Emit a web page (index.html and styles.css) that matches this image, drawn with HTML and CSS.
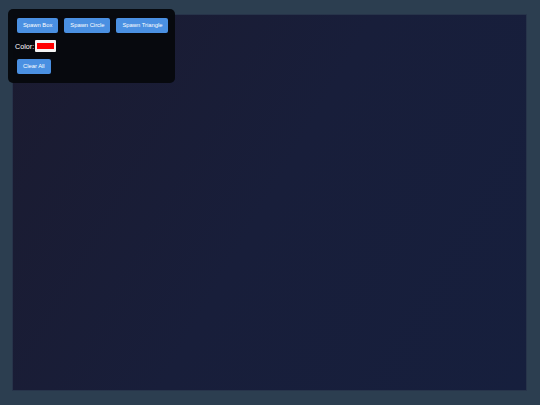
FILE: index.html
```html
<!DOCTYPE html>
<html>
<head>
<meta charset="utf-8">
<link rel="stylesheet" href="styles.css">
</head>
<body>
<div class="stage">
  <div class="canvas"></div>
  <div class="panel">
    <div class="row buttons">
      <button class="btn">Spawn Box</button>
      <button class="btn">Spawn Circle</button>
      <button class="btn">Spawn Triangle</button>
    </div>
    <div class="row color-row">
      <span class="label">Color:</span>
      <span class="swatch"><span class="swatch-fill"></span></span>
    </div>
    <div class="row">
      <button class="btn">Clear All</button>
    </div>
  </div>
</div>
</body>
</html>
```
FILE: styles.css
```css
html, body {
  margin: 0;
  padding: 0;
}
body {
  width: 540px;
  height: 405px;
  background: #2c3e50;
  font-family: "Liberation Sans", Arial, sans-serif;
  overflow: hidden;
}
.stage {
  position: relative;
  width: 540px;
  height: 405px;
  padding: 14px 13px 14px 12px;
  box-sizing: border-box;
}
.canvas {
  width: 515px;
  height: 377px;
  box-sizing: border-box;
  border: 1px solid #27344a;
  background: linear-gradient(120deg, #1b1b30 0%, #181e3a 50%, #161f3d 100%);
}
.panel {
  position: absolute;
  top: 9px;
  left: 8px;
  width: 167px;
  height: 74px;
  box-sizing: border-box;
  padding: 9px 9px 10px 9px;
  background: rgba(6, 8, 12, 0.96);
  border-radius: 5px;
  display: flex;
  flex-direction: column;
  gap: 7px;
}
.row {
  display: flex;
  align-items: center;
}
.buttons {
  gap: 6px;
}
.btn {
  flex-shrink: 0;
  white-space: nowrap;
  height: 15px;
  margin: 0;
  padding: 0 6px;
  border: none;
  border-radius: 2px;
  background: #4a90e2;
  color: #ffffff;
  font-family: "Liberation Sans", Arial, sans-serif;
  font-size: 5.8px;
  line-height: 15px;
}
.color-row {
  height: 12px;
  margin-left: -2px;
  gap: 1px;
}
.label {
  color: #ffffff;
  font-size: 7.2px;
  white-space: nowrap;
}
.swatch {
  flex-shrink: 0;
  width: 21px;
  height: 12px;
  box-sizing: border-box;
  padding: 3px 2px;
  background: #f4f4f4;
  border-radius: 1px;
  display: flex;
}
.swatch-fill {
  flex: 1;
  background: #ff0000;
}
```
